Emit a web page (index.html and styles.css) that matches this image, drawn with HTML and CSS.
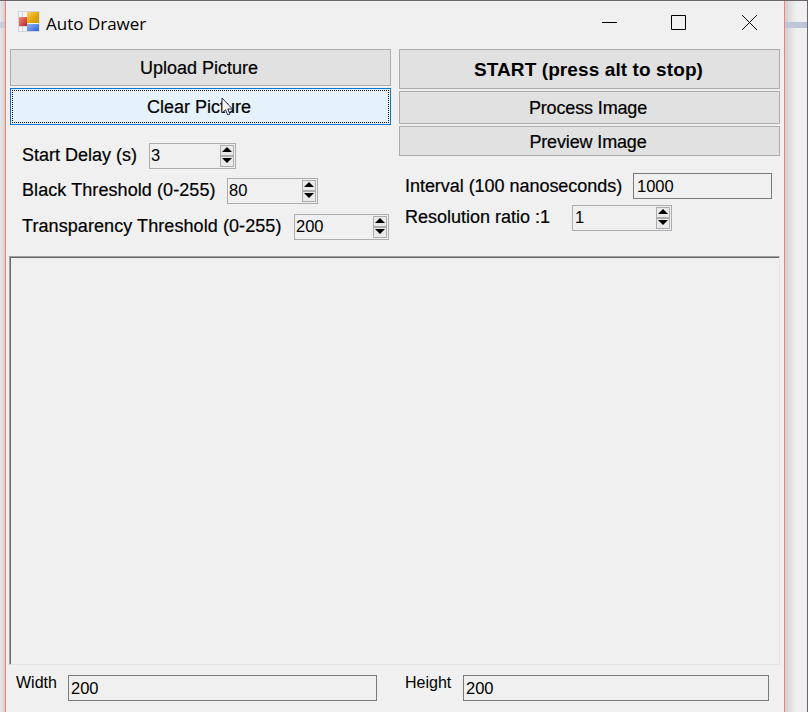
FILE: index.html
```html
<!DOCTYPE html>
<html lang="en">
<head>
<meta charset="utf-8">
<title>Auto Drawer</title>
<link rel="stylesheet" href="styles.css">
</head>
<body>
<div class="desktop">
  <div class="edge edge-left"></div>
  <main class="window">
    <header class="titlebar">
      <svg class="app-icon" width="22" height="22" viewBox="0 0 22 22">
        <defs>
          <linearGradient id="y" x1="0" y1="0" x2="1" y2="1"><stop offset="0" stop-color="#f7d468"/><stop offset=".5" stop-color="#e5a90b"/><stop offset="1" stop-color="#cf9400"/></linearGradient>
          <linearGradient id="r" x1="0" y1="0" x2="1" y2="1"><stop offset="0" stop-color="#ef8b80"/><stop offset="1" stop-color="#b92323"/></linearGradient>
          <linearGradient id="b" x1="0" y1="0" x2="1" y2="1"><stop offset="0" stop-color="#8cb4fa"/><stop offset="1" stop-color="#2f62d2"/></linearGradient>
        </defs>
        <rect x=".5" y=".5" width="20.500" height="20" fill="#f3f4f7" stroke="#d3d5da"/>
        <path d="M4.500 1v5M4.500 15v6M1 15.500h8" stroke="#d3d5da"/>
        <rect x="1" y="6" width="8" height="9" fill="url(#r)"/>
        <rect x="9" y="1" width="12" height="11" fill="url(#y)"/>
        <rect x="9" y="13" width="12" height="7" fill="url(#b)"/>
      </svg>
      <h1>Auto Drawer</h1>
      <svg class="captions" width="160" height="20" viewBox="0 0 160 20" fill="none" stroke="#000">
        <path d="M0 8.500h15M69.500 1.500h14v14h-14z"/>
        <path d="M140 1l15 15M155 1l-15 15"/>
      </svg>
    </header>
    <section class="controls">
      <div class="column">
        <button class="btn upload">Upload Picture</button>
        <button class="btn clear"><span class="focus">Clear Picture</span></button>
        <svg class="pointer" width="13" height="20" viewBox="0 0 13 20"><path d="M1 1v15l3.500-3.200 2.300 5.200 2.200-1-2.300-5H11.500z" fill="#f4f4f6" stroke="#1d1d35" stroke-width=".9"/></svg>
        <div class="field delay"><label>Start Delay (s)</label><div class="spin"><span>3</span><i class="arrows"><b></b><b></b></i></div></div>
        <div class="field black"><label>Black Threshold (0-255)</label><div class="spin"><span>80</span><i class="arrows"><b></b><b></b></i></div></div>
        <div class="field transparency"><label>Transparency Threshold (0-255)</label><div class="spin"><span>200</span><i class="arrows"><b></b><b></b></i></div></div>
      </div>
      <div class="column">
        <button class="btn start">START (press alt to stop)</button>
        <button class="btn process">Process Image</button>
        <button class="btn preview">Preview Image</button>
        <div class="field interval"><label>Interval (100 nanoseconds)</label><div class="box">1000</div></div>
        <div class="field ratio"><label>Resolution ratio :1</label><div class="spin"><span>1</span><i class="arrows"><b></b><b></b></i></div></div>
      </div>
    </section>
    <section class="canvas"></section>
    <footer class="sizes">
      <label class="w">Width</label><div class="box wbox">200</div>
      <label class="h">Height</label><div class="box hbox">200</div>
    </footer>
  </main>
  <div class="edge edge-right"></div>
</div>
</body>
</html>
```
FILE: styles.css
```css
* { box-sizing: border-box; }
body { margin: 0; background: #f0f0f0; color: #000; font-family: "Liberation Sans", Arial, sans-serif; overflow: hidden; }
.desktop { display: flex; width: 808px; height: 712px; border-top: 1px solid #69676a; border-right: 1px solid #69676a; }
.edge { background-repeat: no-repeat; }
.edge-left { width: 5px; background: linear-gradient(90deg, #e8e8e8, #d2d2d2); }
.edge-left::before, .edge-right::before { content: ""; display: block; margin-top: 21px; height: 6px; background: #bdc7d7; }
.edge-left::before { opacity: .75; }
.edge-right { flex: 1; background: linear-gradient(90deg, #cfcfcf 0, #dcdcdc 4px, #e8e8e8 8px, #f0f0f0 12px); }
.window { width: 780px; height: 711px; background: #f0f0f0; border-left: 1px solid #f5827a; border-right: 1px solid #f5827a; }
.titlebar { display: flex; height: 48px; padding-left: 12px; }
.app-icon { margin-top: 10px; }
.titlebar h1 { margin: 10px 0 0 6px; width: 556px; font: 400 17px/26px "Open Sans", "Noto Sans", sans-serif; }
.captions { margin-top: 13px; }
.controls { display: grid; grid-template-columns: 381px 381px; column-gap: 8px; height: 207px; padding-left: 4px; }
.column { display: flex; flex-direction: column; position: relative; }
.btn { display: block; width: 381px; padding: 2px 3px 0 0; margin: 0 0 2px; background: #e1e1e1; border: 1px solid #adadad; border-radius: 0; font: 18px "Liberation Sans", Arial, sans-serif; color: #000; }
.btn, .field label { -webkit-text-stroke: .2px #000; }
.upload { height: 37px; }
.clear { height: 37px; background: #e5f1fb; border-color: #0078d7; padding: 1px; margin-bottom: 18px; }
.focus { display: flex; align-items: center; justify-content: center; height: 33px; border: 1px dotted #000; padding: 2px 3px 0 0; }
.start { height: 40px; font-size: 19px; font-weight: 700; letter-spacing: .1px; -webkit-text-stroke: 0; padding-right: 2px; }
.process { height: 33px; letter-spacing: -.14px; }
.preview { height: 30px; margin-bottom: 17px; letter-spacing: -.14px; }
.pointer { position: absolute; left: 211px; top: 48px; }
.field { display: flex; height: 26px; padding-left: 12px; }
.field label { font-size: 18px; line-height: 24px; white-space: nowrap; flex: none; }
.spin { display: flex; justify-content: space-between; height: 26px; border: 1px solid #abadb3; padding: 1px; font-size: 16.500px; line-height: 22px; }
.spin span { margin-top: -1px; }
.arrows { display: grid; grid-template-rows: 11px 11px; width: 14px; height: 22px; margin-right: 0; }
.arrows b { border: 1px solid #adadad; background: #e9e9e9; display: flex; align-items: flex-start; justify-content: center; padding-top: 1px; }
.arrows b::before { content: ""; border: 5px solid transparent; border-top: 0; border-bottom: 5px solid #000; }
.arrows b + b::before { border-bottom: 0; border-top: 5px solid #000; }
.box { height: 26px; border: 1px solid #7a7a7a; padding-left: 3px; font-size: 16.500px; line-height: 25px; }
.delay { margin-bottom: 9px; }
.black label, .transparency label { letter-spacing: .08px; }
.delay label { width: 127px; }
.delay .spin { width: 87px; }
.black { margin-bottom: 10px; }
.black label { width: 205px; }
.black .spin { width: 91px; }
.transparency label { width: 272px; }
.transparency .spin { width: 95px; }
.interval { padding-left: 6px; margin-bottom: 6px; }
.interval label { width: 228px; line-height: 26px; letter-spacing: -.04px; }
.interval .box { width: 139px; }
.ratio { padding-left: 6px; }
.ratio label { width: 167px; }
.ratio .spin { width: 100px; padding-left: 2px; }
.canvas { margin-left: 3px; width: 771px; height: 409px; border: 1px solid; border-color: #a0a0a0 #e3e3e3 #e3e3e3 #a0a0a0; box-shadow: inset 1px 1px #696969; }
.sizes { display: flex; padding: 10px 0 0 10px; }
.sizes label { font-size: 16px; line-height: 16px; }
.sizes .w { width: 52px; }
.sizes .h { width: 58px; }
.wbox { width: 309px; margin-right: 28px; padding-left: 2px; }
.hbox { width: 306px; padding-left: 2px; }
```
